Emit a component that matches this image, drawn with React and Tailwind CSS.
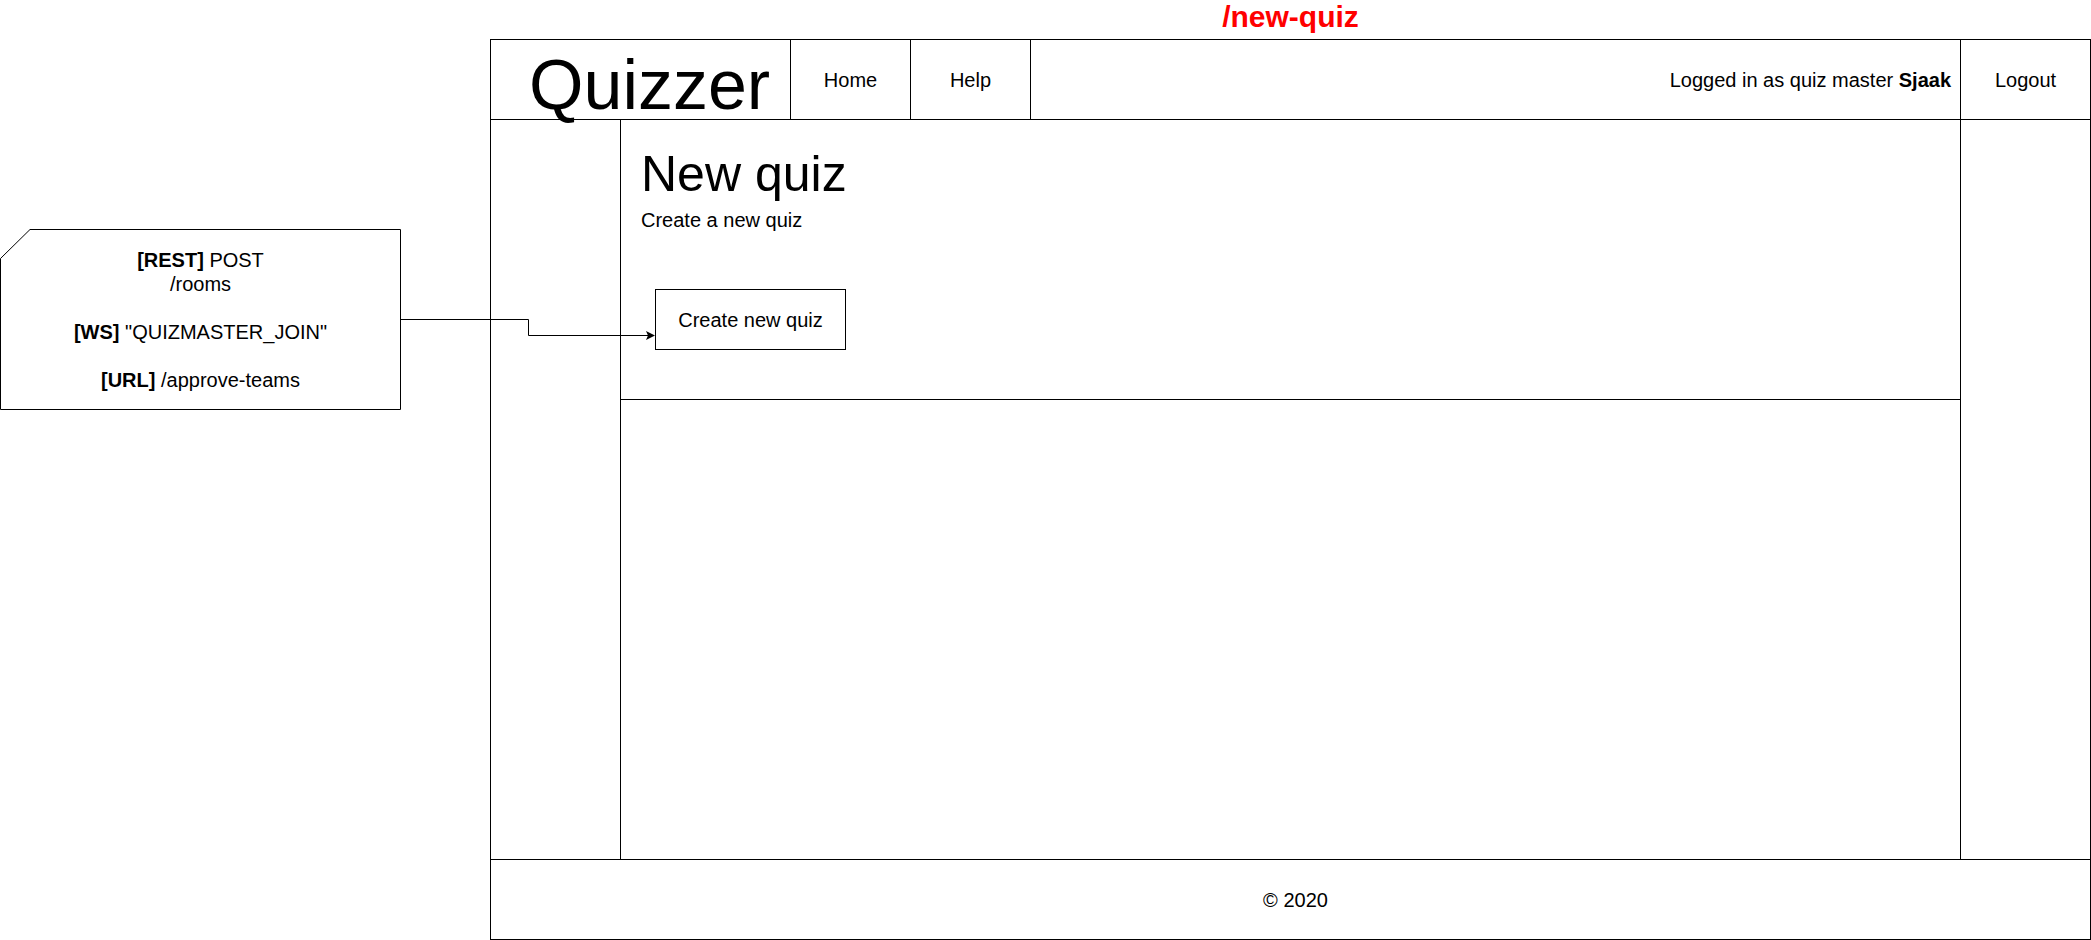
import React from "react";

const font = { fontFamily: '"Liberation Sans", Arial, Helvetica, sans-serif' };

function NoteBox() {
  return (
    <div className="relative mt-[229px] w-[401px] h-[181px]">
      <svg className="absolute inset-0" width="401" height="181" viewBox="0 0 401 181">
        <path d="M0.5,29.5 L30,0.5 L400.5,0.5 L400.5,180.5 L0.5,180.5 Z" fill="white" stroke="black" strokeWidth="1" />
      </svg>
      <div className="relative flex h-full flex-col items-center justify-center text-[20px] leading-[24px] text-black text-center">
        <div><span className="font-bold">[REST]</span> POST</div>
        <div>/rooms</div>
        <div>&nbsp;</div>
        <div><span className="font-bold">[WS]</span> "QUIZMASTER_JOIN"</div>
        <div>&nbsp;</div>
        <div><span className="font-bold">[URL]</span> /approve-teams</div>
      </div>
    </div>
  );
}

export default function App() {
  return (
    <div className="relative flex w-[2091px] h-[940px] bg-white overflow-hidden" style={font}>
      <div className="w-[490px] shrink-0">
        <NoteBox />
      </div>
      <div className="flex flex-col w-[1601px] shrink-0">
        <div className="h-[39px] pt-[2px] text-center text-[30px] leading-none font-bold text-[#ff0000]">/new-quiz</div>
        <div className="flex flex-col w-[1601px] h-[901px] border border-black box-border text-black">
          <div className="flex h-[80px] border-b border-black shrink-0">
            <div className="w-[300px] border-r border-black pl-[38px] pt-[10px] text-[70px] leading-none overflow-visible whitespace-nowrap">Quizzer</div>
            <div className="w-[120px] border-r border-black flex items-center justify-center text-[20px]">Home</div>
            <div className="w-[120px] border-r border-black flex items-center justify-center text-[20px]">Help</div>
            <div className="flex-1 flex items-center justify-end pr-[9px] text-[20px]">
              <span>Logged in as quiz master <span className="font-bold">Sjaak</span></span>
            </div>
            <div className="w-[130px] border-l border-black flex items-center justify-center text-[20px]">Logout</div>
          </div>
          <div className="flex flex-1">
            <div className="w-[130px] border-r border-black" />
            <div className="flex-1 flex flex-col">
              <div className="h-[280px] border-b border-black pl-[20px] pt-[29px]">
                <div className="text-[50px] leading-none">New quiz</div>
                <div className="mt-[11px] text-[20px] leading-none">Create a new quiz</div>
                <div className="mt-[59px] ml-[14px] w-[191px] h-[61px] border border-black flex items-center justify-center text-[20px]">Create new quiz</div>
              </div>
              <div className="flex-1" />
            </div>
            <div className="w-[130px] border-l border-black" />
          </div>
          <div className="h-[80px] border-t border-black flex items-center justify-center pl-[10px] text-[20px] shrink-0">© 2020</div>
        </div>
      </div>
      <svg className="absolute left-0 top-0 pointer-events-none" width="2091" height="940">
        <polyline points="401,319.5 528.5,319.5 528.5,335.5 648,335.5" fill="none" stroke="black" strokeWidth="1" />
        <path d="M655,335.5 L646,331 L648,335.5 L646,340 Z" fill="black" />
      </svg>
    </div>
  );
}
